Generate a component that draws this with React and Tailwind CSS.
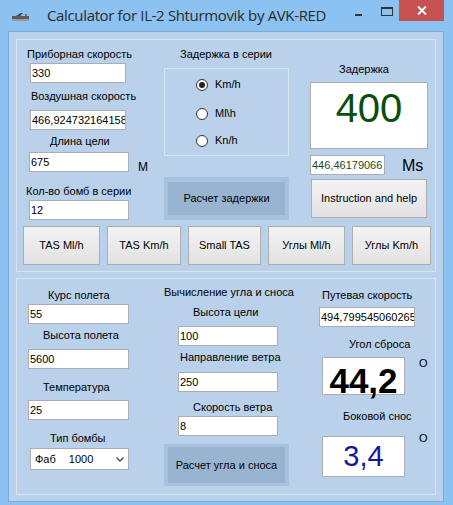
import React from "react";

const Label = ({ className = "", children }) => (
  <div className={`text-[11px] leading-[13px] whitespace-nowrap ${className}`}>
    {children}
  </div>
);

const TextBox = ({ className = "", children }) => (
  <div
    className={`h-[20px] border border-[#abadb3] bg-white pl-[1px] text-[11px] leading-[18px] whitespace-nowrap overflow-hidden ${className}`}
  >
    {children}
  </div>
);

const GrayButton = ({ className = "", children }) => (
  <div
    className={`flex items-center justify-center h-[39px] border border-[#adadad] bg-linear-to-b from-[#f3f3f3] to-[#e2e2e2] text-[11px] ${className}`}
  >
    {children}
  </div>
);

const BlueButton = ({ className = "", children }) => (
  <div className={`w-[125px] bg-[#a8c1de] px-[4px] ${className}`}>
    <div className="h-full w-full bg-[#99b4d1] flex items-center justify-center text-[11px]">
      {children}
    </div>
  </div>
);

const Radio = ({ checked, className = "", children }) => (
  <div className={`flex items-center h-[13px] ml-[31px] ${className}`}>
    <div className="w-[12px] h-[12px] rounded-full border border-[#333] bg-white flex items-center justify-center">
      {checked && <div className="w-[6px] h-[6px] rounded-full bg-[#222]" />}
    </div>
    <span className="ml-[7px] text-[11px] leading-[13px]">{children}</span>
  </div>
);

const ResultBox = ({ className = "", children }) => (
  <div className={`w-[83px] border border-[#abadb3] bg-white flex justify-center pt-[5px] ${className}`}>
    {children}
  </div>
);

const TitleBar = () => (
  <div className="h-[31px] flex items-start">
    {/* plane icon */}
    <svg className="ml-[12px] mt-[12px]" width="17" height="10" viewBox="0 0 17 10">
      <rect x="0" y="4" width="17" height="3" fill="#5c5c5c" />
      <rect x="0" y="7" width="17" height="2" fill="#9a9a9a" />
      <path d="M4 4 L9 1 L11 1 L8 4 Z" fill="#3d3d3d" />
      <rect x="13" y="2" width="2" height="2" fill="#6a6a6a" />
    </svg>
    <div className="ml-[18px] mt-[6px] text-[15px] leading-[18px] text-[#2a2a2a] font-['Open_Sans',sans-serif] tracking-[-0.35px] whitespace-nowrap">
      Calculator for IL-2 Shturmovik by AVK-RED
    </div>
    <div className="ml-auto flex items-start">
      <div className="mt-[14px] w-[7px] h-[2px] bg-[#333]" />
      <div className="ml-[19px] mt-[7px] w-[12px] h-[9px] border border-t-2 border-[#333]" />
      <div className="ml-[6px] mr-[9px] w-[45px] h-[21px] bg-[#c75050] flex items-center justify-center">
        <svg width="10" height="9" viewBox="0 0 10 9">
          <path d="M1 0.5 L9 8.5 M9 0.5 L1 8.5" stroke="#fff" strokeWidth="2" />
        </svg>
      </div>
    </div>
  </div>
);

export default function App() {
  return (
    <div className="w-[453px] h-[505px] bg-[#8bc2f1] overflow-hidden font-['Liberation_Sans',Arial,sans-serif] text-black">
      <TitleBar />
      <div className="ml-[8px] w-[436px] h-[471px] border border-[#7eaad6] bg-[#b9d1ea] px-[7px] pt-[7px]">
        {/* Top panel */}
        <div className="h-[233px] border border-[#d7e4f2]">
          <div className="flex h-[182px]">
            {/* left column */}
            <div className="w-[147px] flex flex-col items-start">
              <Label className="ml-[10px] mt-[8px]">Приборная скорость</Label>
              <TextBox className="ml-[13px] mt-[2px] w-[96px]">330</TextBox>
              <Label className="ml-[14px] mt-[7px]">Воздушная скорость</Label>
              <TextBox className="ml-[13px] mt-[7px] w-[96px]">466,924732164158</TextBox>
              <Label className="ml-[33px] mt-[5px]">Длина цели</Label>
              <div className="flex items-start ml-[12px] mt-[4px]">
                <TextBox className="w-[100px]">675</TextBox>
                <div className="ml-[9px] mt-[9px] text-[12px] leading-[12px]">M</div>
              </div>
              <Label className="ml-[9px] mt-[12px]">Кол-во бомб в серии</Label>
              <TextBox className="ml-[12px] mt-[2px] w-[100px]">12</TextBox>
            </div>
            {/* middle column */}
            <div className="w-[125px] flex flex-col items-start">
              <Label className="ml-[16px] mt-[8px]">Задержка в серии</Label>
              <div className="mt-[7px] w-[125px] h-[88px] border border-[#d7e4f2] flex flex-col">
                <Radio checked className="mt-[9px]">Km/h</Radio>
                <Radio className="mt-[16px]">Ml\h</Radio>
                <Radio className="mt-[14px]">Kn/h</Radio>
              </div>
              <BlueButton className="mt-[21px] h-[43px] py-[5px]">Расчет задержки</BlueButton>
            </div>
            {/* right column */}
            <div className="flex-1 flex flex-col items-start">
              <Label className="ml-[50px] mt-[23px]">Задержка</Label>
              <div className="ml-[21px] mt-[6px] w-[118px] h-[67px] border border-[#abadb3] bg-white flex justify-center pt-[5px]">
                <span className="text-[40px] leading-[40px] text-[#0b4d0b]">400</span>
              </div>
              <div className="flex items-start ml-[21px] mt-[6px]">
                <TextBox className="w-[75px] text-[#1d4d1d]">446,46179066</TextBox>
                <div className="ml-[17px] mt-[3px] text-[16px] leading-[16px]">Ms</div>
              </div>
              <GrayButton className="ml-[22px] mt-[4px] w-[116px]">Instruction and help</GrayButton>
            </div>
          </div>
          <div className="flex gap-[7px] ml-[6px] mt-[4px]">
            <GrayButton className="w-[77px]">TAS Ml/h</GrayButton>
            <GrayButton className="w-[74px]">TAS Km/h</GrayButton>
            <GrayButton className="w-[73px]">Small TAS</GrayButton>
            <GrayButton className="w-[77px]">Углы Ml/h</GrayButton>
            <GrayButton className="w-[79px]">Углы Km/h</GrayButton>
          </div>
        </div>

        {/* Bottom panel */}
        <div className="mt-[6px] h-[217px] border border-[#d7e4f2] flex">
          {/* left column */}
          <div className="w-[147px] flex flex-col items-start">
            <Label className="ml-[31px] mt-[10px]">Курс полета</Label>
            <TextBox className="ml-[11px] mt-[2px] w-[101px]">55</TextBox>
            <Label className="ml-[26px] mt-[5px]">Высота полета</Label>
            <TextBox className="ml-[11px] mt-[7px] w-[101px]">5600</TextBox>
            <Label className="ml-[26px] mt-[12px]">Температура</Label>
            <TextBox className="ml-[11px] mt-[6px] w-[101px]">25</TextBox>
            <Label className="ml-[33px] mt-[12px]">Тип бомбы</Label>
            <div className="ml-[13px] mt-[3px] w-[99px] h-[22px] border border-[#abadb3] bg-white flex items-start pl-[4px] text-[11px] leading-[16px]">
              <span className="mt-[2px]">Фаб</span>
              <span className="ml-[13px] mt-[2px]">1000</span>
              <svg className="ml-auto mr-[4px] mt-[8px]" width="8" height="5" viewBox="0 0 8 5">
                <path d="M0.5 0.5 L4 4 L7.5 0.5" stroke="#444" strokeWidth="1.3" fill="none" />
              </svg>
            </div>
          </div>
          {/* middle column */}
          <div className="w-[125px] flex flex-col items-start">
            <Label className="mt-[7px]">Вычисление угла и сноса</Label>
            <Label className="ml-[29px] mt-[7px]">Высота цели</Label>
            <TextBox className="ml-[14px] mt-[7px] w-[100px] h-[19px] leading-[17px]">100</TextBox>
            <Label className="ml-[16px] mt-[5px]">Направление ветра</Label>
            <TextBox className="ml-[14px] mt-[8px] w-[100px] h-[19px] leading-[17px]">250</TextBox>
            <Label className="ml-[29px] mt-[9px]">Скорость ветра</Label>
            <TextBox className="ml-[14px] mt-[2px] w-[100px]">8</TextBox>
            <BlueButton className="mt-[8px] h-[42px] py-[3px]">Расчет угла и сноса</BlueButton>
          </div>
          {/* right column */}
          <div className="flex-1 flex flex-col items-start">
            <Label className="ml-[33px] mt-[10px]">Путевая скорость</Label>
            <TextBox className="ml-[30px] mt-[5px] w-[96px] h-[19px] leading-[17px]">494,799545060265</TextBox>
            <Label className="ml-[60px] mt-[11px]">Угол сброса</Label>
            <div className="flex items-start ml-[33px] mt-[6px]">
              <ResultBox className="h-[38px]">
                <span className="text-[35px] leading-[35px] font-bold">44,2</span>
              </ResultBox>
              <div className="ml-[14px] text-[11px] leading-[13px]">O</div>
            </div>
            <Label className="ml-[54px] mt-[15px]">Боковой снос</Label>
            <div className="flex items-start ml-[33px] mt-[13px]">
              <ResultBox className="h-[41px]">
                <span className="text-[29px] leading-[29px] text-[#1515a0]">3,4</span>
              </ResultBox>
              <div className="ml-[14px] -mt-[4px] text-[11px] leading-[13px]">O</div>
            </div>
          </div>
        </div>
      </div>
    </div>
  );
}
